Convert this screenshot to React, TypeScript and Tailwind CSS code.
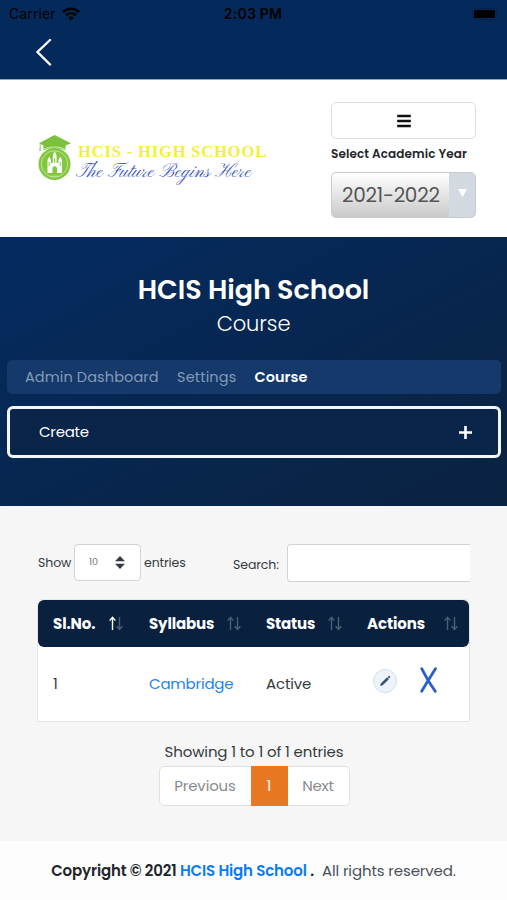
import type { ReactNode } from 'react'

const columns = [
  { label: 'Sl.No.', sorted: true, className: 'w-[96px] pl-[15px] pr-[11px]', text: 'tracking-[-0.1px]' },
  { label: 'Syllabus', sorted: false, className: 'w-[117px] pl-[15px] pr-[10px]', text: 'tracking-[-0.15px]' },
  { label: 'Status', sorted: false, className: 'w-[101px] pl-[15px] pr-[10px]', text: 'tracking-[-0.15px]' },
  { label: 'Actions', sorted: false, className: 'w-[117px] pl-[15px] pr-[11px]', text: 'tracking-[-0.1px]' },
]

function SortIcon({ active }: { active: boolean }) {
  return (
    <svg className="w-[14px] h-[15px] -mt-[2px] shrink-0" viewBox="0 0 14 15" fill="none" stroke="#fff" strokeWidth="1.4">
      <path d="M3.5 14V1.5M.6 4.6l2.9-3.2 2.9 3.2" opacity={active ? 1 : 0.28} />
      <path d="M10.5 1v12.5M7.6 10.3l2.9 3.2 2.9-3.2" opacity="0.28" />
    </svg>
  )
}

function StatusBar() {
  return (
    <div className="h-[27px] grid grid-cols-3 items-center pl-[9px] pr-[10px] text-black text-[14px] font-[Inter,sans-serif]">
      <div className="flex items-center gap-[6px]">
        <span className="tracking-[0.1px]">Carrier</span>
        <svg className="w-[18px] h-[14px]" viewBox="0 0 18 14" fill="none" stroke="#000" strokeWidth="2.6">
          <path d="M1 5.1C5.6.6 12.4.6 17 5.1" />
          <path d="M4 8.3c2.9-2.7 7.1-2.7 10 0" />
          <path d="M6.2 10.7 9 13.6l2.8-2.9c-1.6-1.5-4-1.5-5.6 0z" fill="#000" stroke="none" />
        </svg>
      </div>
      <span className="text-center font-semibold tracking-[0.25px]">2:03 PM</span>
      <div className="flex justify-end">
        <div className="w-[25px] h-[12px] rounded-[3px] border border-[#04214c] bg-black bg-clip-content p-[1px]" />
      </div>
    </div>
  )
}

function SchoolLogo() {
  return (
    <div className="flex items-start gap-[4px]">
      <svg className="w-[34px] h-[46px] mt-px shrink-0" viewBox="0 0 34 46">
        <circle cx="16.5" cy="29" r="16" fill="#82c83f" />
        <circle cx="16.5" cy="29" r="13.2" fill="none" stroke="#d6edc0" strokeWidth="0.7" />
        <path d="M16.5 0 33 8.2l-5.5 2.4v5c-6-3.4-16-3.4-22 0v-5L1 8.2z" fill="#7cc13b" />
        <path d="M5.5 14.5c6-3.4 16-3.4 22 0" fill="none" stroke="#e4f3d6" strokeWidth="0.8" />
        <path d="M2.2 8.8v6" stroke="#82c83f" strokeWidth="0.8" />
        <path d="m2.2 12-1.4 3.8h2.6z" fill="#a5d27b" />
        <path
          d="M9.5 38V25l1.7-3.5L13 25v3h1.8v-7.5l1.9-4.2 1.9 4.2V28h1.8v-3l1.8-3.5L24 25v13h-5v-4.5a2.3 2.3 0 0 0-4.6 0V38z"
          fill="#fff"
        />
        <path d="M11.2 27v4m11-4v4m-5.5-8v5" stroke="#82c83f" strokeWidth="1" />
        <path d="M12.5 41.2h8" stroke="#d6edc0" strokeWidth="1" strokeDasharray="1.5 .8" />
      </svg>
      <div className="flex flex-col pt-[8px] whitespace-nowrap">
        <span className="pl-[2px] font-['Liberation_Serif',serif] font-bold text-[16.5px] leading-[19px] tracking-[0.85px] text-[#f5ec3e]">
          HCIS - HIGH SCHOOL
        </span>
        <span className="pt-px font-['Pinyon_Script','Great_Vibes','Liberation_Serif',serif] text-[19px] leading-[22px] tracking-[0.28px] text-[#3450c4]">
          The Future Begins Here
        </span>
      </div>
    </div>
  )
}

function TopPanel() {
  return (
    <section className="h-[158px] border-t border-[#93a5c4] bg-white flex justify-between pl-[38px] pr-[31px] pt-[22px]">
      <div className="pt-[32px]">
        <SchoolLogo />
      </div>
      <div className="w-[145px] flex flex-col">
        <button type="button" className="h-[37px] rounded-[5px] border border-[#dcdedf] flex items-center justify-center">
          <svg className="w-[14px] h-[14px]" viewBox="0 0 14 14" stroke="#111" strokeWidth="2.4">
            <path d="M.2 2h13.6M.2 7h13.6M.2 12h13.6" />
          </svg>
        </button>
        <label className="h-[33px] leading-[29px] text-[12px] font-semibold tracking-[0.11px] text-[#212529] whitespace-nowrap">
          Select Academic Year
        </label>
        <div className="h-[46px] flex rounded-[5px] border border-[#c9cccf] overflow-hidden bg-linear-to-b from-white to-[#cacaca]">
          <span className="flex-1 pl-[10px] leading-[45px] text-[20px] text-[#555] tracking-[-0.27px] whitespace-nowrap">
            2021-2022
          </span>
          <span className="w-[26px] bg-[#d2d9e1] flex items-center justify-center">
            <svg className="w-[9px] h-[8px] mb-[4px]" viewBox="0 0 9 8">
              <path d="M0 0h9L4.5 8z" fill="#fff" />
            </svg>
          </span>
        </div>
      </div>
    </section>
  )
}

function Hero() {
  return (
    <section className="h-[269px] bg-linear-to-br from-[#042b61] to-[#0a2240] px-[7px] pt-[35px] text-white">
      <h1 className="text-center text-[27px] leading-[36px] font-semibold tracking-[-0.05px]">HCIS High School</h1>
      <p className="text-center text-[21px] leading-[32px] font-light tracking-[-0.1px]">Course</p>
      <nav className="mt-[20px] h-[34px] w-[494px] rounded-[5px] bg-[#14396a] flex items-center pt-[1px] pl-[18px] text-[14.5px] text-[#849bb9] whitespace-nowrap">
        <span className="w-[152px] tracking-[0.1px]">Admin Dashboard</span>
        <span className="w-[77px] tracking-[0.15px]">Settings</span>
        <span className="pl-[0.5px] font-semibold text-white tracking-[0.05px]">Course</span>
      </nav>
      <div className="mt-[12px] h-[52px] w-[494px] rounded-[6px] border-[3px] border-[#f4f7fa] bg-[#09254a] flex items-center justify-between pl-[29px] pr-[26px] text-[15px]">
        <span className="tracking-[-0.25px]">Create</span>
        <svg className="w-[13px] h-[13px]" viewBox="0 0 13 13" stroke="#fff" strokeWidth="2.6">
          <path d="M6.5 0v13M0 6.5h13" />
        </svg>
      </div>
    </section>
  )
}

function TableControls() {
  return (
    <div className="flex h-[39px] text-[12.5px] text-[#343a40] whitespace-nowrap">
      <div className="w-[195px] flex items-center h-[37px]">
        <span className="w-[36px] pt-[2px] tracking-[-0.1px]">Show</span>
        <span className="w-[67px] h-[37px] rounded-[4px] border border-[#ced4da] bg-white flex items-center justify-between pl-[14px] pr-[15px] text-[9.5px] text-[#6c757d]">
          10
          <svg className="w-[10px] h-[13px]" viewBox="0 0 10 13" fill="#343a40">
            <path d="M5 0l5 5.3H0zM5 13l5-5.3H0z" />
          </svg>
        </span>
        <span className="ml-[3px] pt-[2px] tracking-[-0.1px]">entries</span>
      </div>
      <span className="w-[54px] pt-[1px] leading-[39px] tracking-[-0.1px]">Search:</span>
      <div className="flex-1 h-[38px] rounded-l-[4px] border border-r-0 border-[#ced4da] bg-white" />
    </div>
  )
}

function Cell({ className, children }: { className: string; children: ReactNode }) {
  return <div className={className}>{children}</div>
}

function CourseTable() {
  return (
    <div className="mt-[16px] w-[433px] border border-[#e4e6e8] bg-white rounded-t-[6px] text-[15px]">
      <div className="h-[47px] flex rounded-[6px] bg-[#09203f] pt-px text-white font-bold">
        {columns.map(col => (
          <div key={col.label} className={`flex items-center justify-between ${col.className}`}>
            <span className={col.text}>{col.label}</span>
            <SortIcon active={col.sorted} />
          </div>
        ))}
      </div>
      <div className="h-[74px] flex items-center text-[#343a40]">
        <Cell className="w-[96px] pl-[15px]">1</Cell>
        <Cell className="w-[117px] pl-[15px] text-[#2283f0] tracking-[-0.2px]">Cambridge</Cell>
        <Cell className="w-[101px] pl-[15px] tracking-[-0.15px]">Active</Cell>
        <Cell className="flex items-center pl-[21px] pb-[6px] gap-[22px]">
          <span className="w-[24px] h-[24px] rounded-full border border-[#cfdfea] bg-[#eef4f9] flex items-center justify-center">
            <svg className="w-[12px] h-[12px]" viewBox="0 0 12 12" fill="#34527e">
              <path d="M8.6 1.9 9.6 1c.4-.3.7-.2 1.1.2s.6.8.3 1.2l-.9 1zM8 2.3l1.9 1.9-6.2 6.1-2.6.8.7-2.7z" />
            </svg>
          </span>
          <svg className="w-[17px] h-[26px] -mt-[2px] ml-px" viewBox="0 0 17 26" fill="none" stroke="#2b5fc7" strokeWidth="2.8" strokeLinecap="round">
            <path d="M1.7 1.7c4.6 9.4 9 16.4 13.6 22.6M15.5 1.7C10.5 9.7 6 16.7 1.7 24.3" />
          </svg>
        </Cell>
      </div>
    </div>
  )
}

function Pagination() {
  return (
    <div className="mt-[18px] mr-[36px] flex flex-col items-center text-[15px]">
      <p className="leading-[24px] h-[26px] text-[#343a40] tracking-[-0.14px]">Showing 1 to 1 of 1 entries</p>
      <div className="h-[40px] w-[191px] flex rounded-[5px] border border-[#dee2e6] bg-white text-center leading-[38px] text-[#868b90]">
        <span className="w-[91px] tracking-[-0.15px]">Previous</span>
        <span className="w-[37px] h-[40px] -mt-px leading-[40px] bg-[#e87722] text-white">1</span>
        <span className="flex-1 tracking-[-0.2px]">Next</span>
      </div>
    </div>
  )
}

export default function App() {
  return (
    <div className="w-[507px] h-[900px] overflow-hidden bg-[#fdfdfd] font-[Poppins,Inter,sans-serif]">
      <header className="h-[79px] bg-[#042a5b]">
        <StatusBar />
        <svg className="ml-[35px] mt-[11px] w-[17px] h-[28px]" viewBox="0 0 17 28" fill="none" stroke="#fff" strokeWidth="2.4" strokeLinecap="round">
          <path d="M15 2 2.5 14 15 26.5" />
        </svg>
      </header>
      <TopPanel />
      <Hero />
      <main className="h-[335px] bg-[#f6f6f6] pl-[37px] pt-[38px]">
        <div className="w-[433px] pl-px">
          <TableControls />
        </div>
        <CourseTable />
        <Pagination />
      </main>
      <footer className="h-[59px] leading-[59px] text-center text-[15px] text-[#495057] whitespace-nowrap">
        <strong className="text-[#212529] font-semibold tracking-[-0.15px]">
          Copyright © 2021 <span className="text-[#087cf7]">HCIS High School</span> .
        </strong>
        <span className="ml-[8px] tracking-[-0.13px]">All rights reserved.</span>
      </footer>
    </div>
  )
}
